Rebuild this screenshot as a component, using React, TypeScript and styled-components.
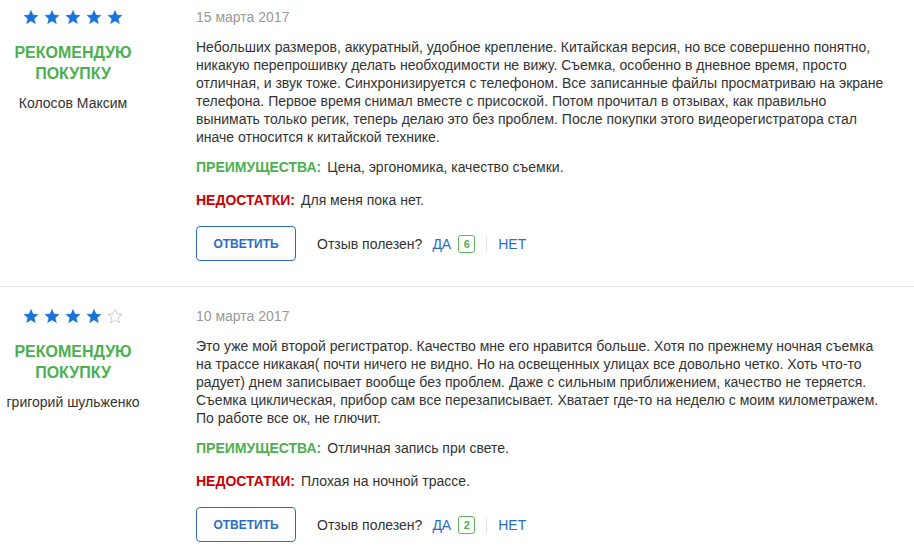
import styled, { createGlobalStyle } from "styled-components";

const GlobalStyle = createGlobalStyle`
    body {
        margin: 0;
        background: #fff;
        font-family: "Liberation Sans", Arial, sans-serif;
        color: #333;
    }
`;

const List = styled.div`
    width: 914px;
`;

const Review = styled.div`
    display: flex;
    padding: 20px 0 25px;
    border-top: 1px solid #e6e6e6;

    &:first-child {
        padding-top: 8px;
        border-top: none;
    }
`;

const Side = styled.div`
    width: 146px;
    margin-right: 50px;
    display: flex;
    flex-direction: column;
    align-items: center;
    text-align: center;
`;

const Stars = styled.div`
    display: flex;
    gap: 5px;
    height: 18px;
    align-items: center;
`;

const Recommend = styled.div`
    margin-top: 16px;
    color: #4caf50;
    font-size: 16px;
    font-weight: 700;
    line-height: 21px;
`;

const Author = styled.div`
    margin-top: 10px;
    font-size: 14px;
    line-height: 18px;
    color: #333;
`;

const Main = styled.div`
    width: 690px;
    font-size: 14px;
    line-height: 18px;
`;

const DateLine = styled.div`
    color: #999;
    margin-bottom: 12px;
`;

const Text = styled.p`
    margin: 0 0 12px;
    color: #333;
`;

const Point = styled.div<{ $last?: boolean }>`
    margin-bottom: ${(p) => (p.$last ? "17px" : "15px")};
`;

const Label = styled.span<{ $color: string }>`
    color: ${(p) => p.$color};
    font-weight: 700;
    margin-right: 6px;
`;

const Actions = styled.div`
    display: flex;
    align-items: center;
`;

const ReplyButton = styled.button`
    width: 100px;
    height: 35px;
    border: 1px solid #2a6cc7;
    border-radius: 4px;
    background: #fff;
    color: #2a6cc7;
    font-family: "Liberation Sans", Arial, sans-serif;
    font-size: 12px;
    font-weight: 700;
    margin-right: 21px;
    cursor: pointer;
`;

const Helpful = styled.span`
    color: #333;
    margin-right: 10px;
`;

const Vote = styled.a`
    color: #2a6cc7;
    text-decoration: none;
    cursor: pointer;
`;

const Badge = styled.span`
    display: inline-flex;
    align-items: center;
    justify-content: center;
    width: 15px;
    height: 16px;
    margin-left: 7px;
    border: 1px solid #5cb85c;
    border-radius: 3px;
    color: #4caf50;
    font-size: 11px;
    font-weight: 700;
`;

const Divider = styled.span`
    width: 1px;
    height: 16px;
    background: #e3e3e3;
    margin: 0 11px;
`;

function Star({ filled }: { filled: boolean }) {
    return (
        <svg width="16" height="16" viewBox="0 0 24 24">
            <path
                d="M12 1.8l3.1 7.1 7.7.6-5.9 5 1.8 7.6L12 18.1l-6.7 4 1.8-7.6-5.9-5 7.7-.6z"
                fill={filled ? "#1a73d8" : "none"}
                stroke={filled ? "#1a73d8" : "#c4c4c4"}
                strokeWidth={filled ? 0.5 : 1.3}
                strokeLinejoin="round"
            />
        </svg>
    );
}

type ReviewData = {
    rating: number;
    author: string;
    date: string;
    text: string;
    pros: string;
    cons: string;
    useful: number;
};

const reviews: ReviewData[] = [
    {
        rating: 5,
        author: "Колосов Максим",
        date: "15 марта 2017",
        text: "Небольших размеров, аккуратный, удобное крепление. Китайская версия, но все совершенно понятно, никакую перепрошивку делать необходимости не вижу. Съемка, особенно в дневное время, просто отличная, и звук тоже. Синхронизируется с телефоном. Все записанные файлы просматриваю на экране телефона. Первое время снимал вместе с присоской. Потом прочитал в отзывах, как правильно вынимать только регик, теперь делаю это без проблем. После покупки этого видеорегистратора стал иначе относится к китайской технике.",
        pros: "Цена, эргономика, качество съемки.",
        cons: "Для меня пока нет.",
        useful: 6,
    },
    {
        rating: 4,
        author: "григорий шульженко",
        date: "10 марта 2017",
        text: "Это уже мой второй регистратор. Качество мне его нравится больше. Хотя по прежнему ночная съемка на трассе никакая( почти ничего не видно. Но на освещенных улицах все довольно четко. Хоть что-то радует) днем записывает вообще без проблем. Даже с сильным приближением, качество не теряется. Съемка циклическая, прибор сам все перезаписывает. Хватает где-то на неделю с моим километражем. По работе все ок, не глючит.",
        pros: "Отличная запись при свете.",
        cons: "Плохая на ночной трассе.",
        useful: 2,
    },
];

export default function App() {
    return (
        <>
            <GlobalStyle />
            <List>
                {reviews.map((r, index) => (
                    <Review key={index}>
                        <Side>
                            <Stars>
                                {[1, 2, 3, 4, 5].map((n) => (
                                    <Star key={n} filled={n <= r.rating} />
                                ))}
                            </Stars>
                            <Recommend>
                                РЕКОМЕНДУЮ
                                <br />
                                ПОКУПКУ
                            </Recommend>
                            <Author>{r.author}</Author>
                        </Side>
                        <Main>
                            <DateLine>{r.date}</DateLine>
                            <Text>{r.text}</Text>
                            <Point>
                                <Label $color="#4caf50">ПРЕИМУЩЕСТВА:</Label>
                                {r.pros}
                            </Point>
                            <Point $last>
                                <Label $color="#cc0000">НЕДОСТАТКИ:</Label>
                                {r.cons}
                            </Point>
                            <Actions>
                                <ReplyButton>ОТВЕТИТЬ</ReplyButton>
                                <Helpful>Отзыв полезен?</Helpful>
                                <Vote>ДА</Vote>
                                <Badge>{r.useful}</Badge>
                                <Divider />
                                <Vote>НЕТ</Vote>
                            </Actions>
                        </Main>
                    </Review>
                ))}
            </List>
        </>
    );
}
